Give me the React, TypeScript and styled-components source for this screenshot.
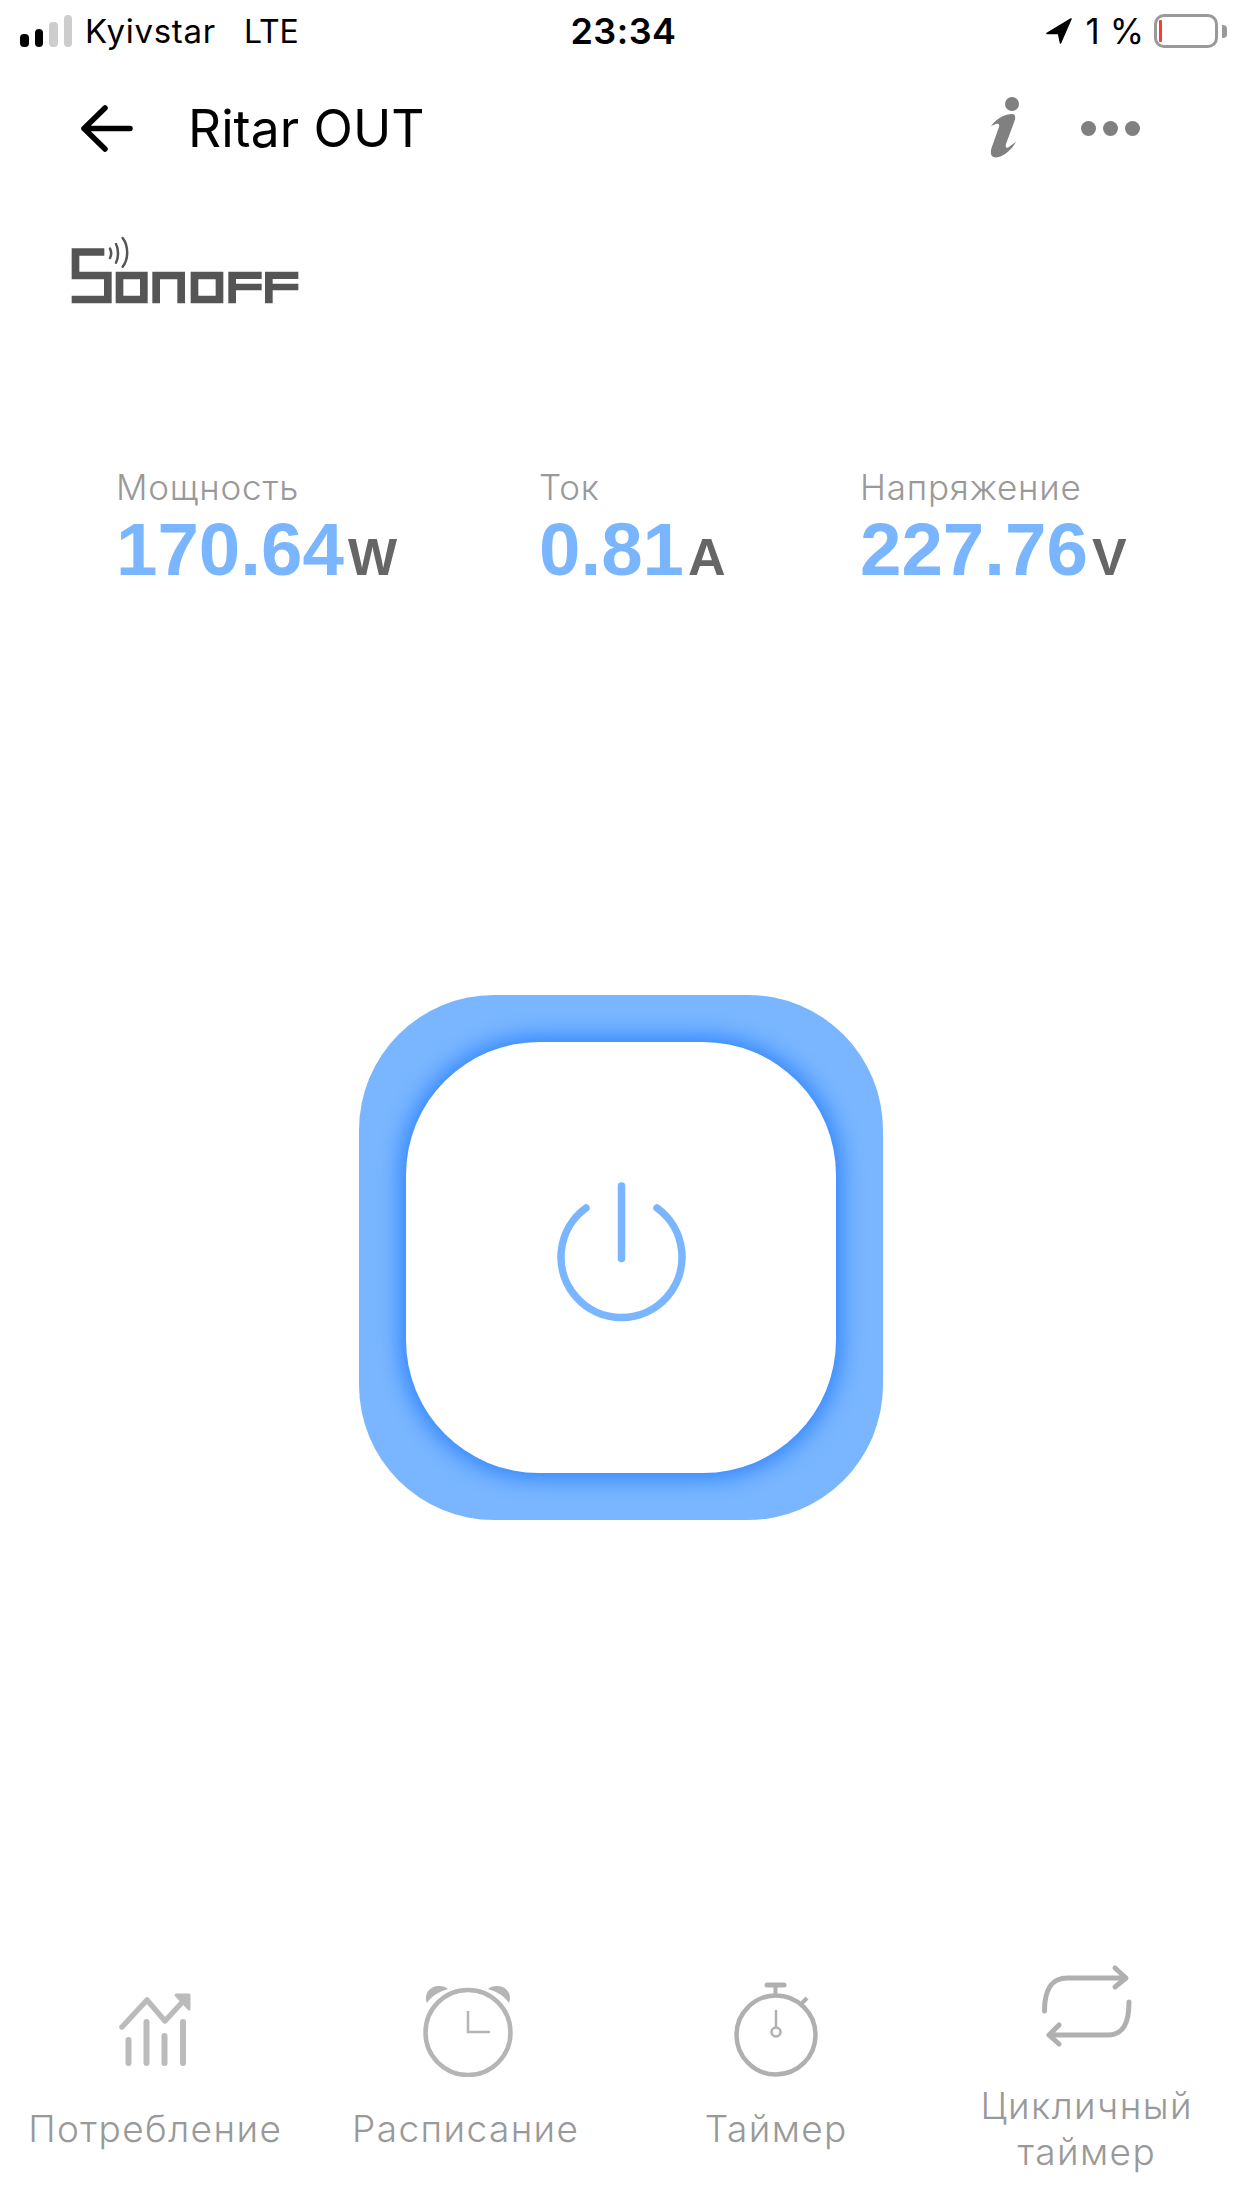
import styled, { createGlobalStyle } from 'styled-components';

const GlobalStyle = createGlobalStyle`
  html, body {
    margin: 0;
    padding: 0;
    background: #fff;
  }
`;

const Page = styled.div`
  width: 1242px;
  height: 2208px;
  overflow: hidden;
  display: flex;
  flex-direction: column;
  background: #fff;
  font-family: Inter, Roboto, 'Noto Sans', sans-serif;
`;

const StatusBar = styled.div`
  height: 62px;
  padding: 0 15px 0 20px;
  display: grid;
  grid-template-columns: 1fr auto 1fr;
  align-items: center;
  font-size: 33px;
  color: #000;
`;

const StatusLeft = styled.div`
  display: flex;
  align-items: center;
`;

const Signal = styled.div`
  display: flex;
  align-items: flex-end;
  gap: 6px;
  height: 32px;
  margin-right: 13px;
`;

const SignalBar = styled.span<{ $h: number; $on?: boolean }>`
  width: 8.5px;
  height: ${p => p.$h}px;
  border-radius: 4px;
  background: ${p => (p.$on ? '#000' : '#cdcdcd')};
`;

const Carrier = styled.span`
  margin-right: 28px;
  letter-spacing: 0.7px;
`;

const Network = styled.span`
  font-size: 32px;
`;

const Clock = styled.span`
  font-size: 36px;
  font-weight: 600;
  letter-spacing: 0.5px;
`;

const StatusRight = styled.div`
  display: flex;
  align-items: center;
  justify-content: flex-end;
`;

const Percent = styled.span`
  font-size: 35px;
  margin: 0 10px 0 14px;
`;

const Battery = styled.div`
  width: 64px;
  height: 34px;
  box-sizing: border-box;
  border: 3px solid #999;
  border-radius: 10px;
  padding: 3px 2px;
  display: flex;
`;

const BatteryLevel = styled.span`
  width: 3px;
  background: #ff3b30;
  border-radius: 1px;
`;

const BatteryNub = styled.span`
  width: 5px;
  height: 13px;
  margin-left: 4px;
  background: #999;
  border-radius: 0 4px 4px 0;
`;

const NavBar = styled.div`
  height: 132px;
  padding: 0 102px 0 81px;
  display: flex;
  align-items: center;
`;

const NavTitle = styled.h1`
  margin: 0 0 0 55px;
  font-size: 51.5px;
  font-weight: 400;
  color: #000;
`;

const NavActions = styled.div`
  margin-left: auto;
  display: flex;
  align-items: center;
  gap: 42px;
`;

const Dots = styled.div`
  display: flex;
  gap: 7px;
`;

const Dot = styled.span`
  width: 15px;
  height: 15px;
  border-radius: 50%;
  background: #808080;
`;

const LogoRow = styled.div`
  margin-top: 36px;
  padding-left: 60px;
  height: 80px;
`;

const Stats = styled.div`
  margin-top: 155px;
  padding-left: 116px;
  display: grid;
  grid-template-columns: 423px 321px 1fr;
`;

const StatLabel = styled.div`
  font-size: 35px;
  font-weight: 300;
  letter-spacing: 0.8px;
  line-height: 44px;
  color: #999;
`;

const StatValue = styled.div`
  margin-top: 1px;
  font-family: 'Liberation Sans', Arial, sans-serif;
  font-weight: 700;
  font-size: 74.5px;
  line-height: 80px;
  color: #7ab6ff;
  white-space: nowrap;
`;

const StatUnit = styled.span`
  font-size: 52px;
  color: #666;
  margin-left: 4px;
`;

const PowerButton = styled.div`
  margin: 398px auto 0;
  width: 524px;
  height: 525px;
  box-sizing: border-box;
  padding: 47px;
  border-radius: 135px;
  background: #7ab6ff;
  display: flex;
`;

const PowerFace = styled.div`
  flex: 1;
  border-radius: 133px;
  background: #fff;
  box-shadow: 0 0 22px 6px #3186ff;
  display: flex;
  align-items: center;
  justify-content: center;
`;

const TabBar = styled.div`
  margin-top: auto;
  margin-bottom: 23px;
  height: 238px;
  display: grid;
  grid-template-columns: repeat(4, 1fr);
  align-items: center;
`;

const Tab = styled.div`
  display: flex;
  flex-direction: column;
  align-items: center;
  gap: 29px;
`;

const TabIcon = styled.div`
  height: 96px;
  display: flex;
  align-items: center;
  justify-content: center;
`;

const TabLabel = styled.div<{ $narrow?: boolean }>`
  width: ${p => (p.$narrow ? '240px' : 'auto')};
  font-size: 37px;
  line-height: 46px;
  font-weight: 300;
  letter-spacing: 1.4px;
  color: #999;
  text-align: center;
`;

function SonoffLogo() {
  return (
    <svg width="250" height="80" viewBox="0 0 750 240" fill="#555">
      <path d="M35 55h98v22H58v48h97v95H35v-23h97v-49H35z" />
      <path fillRule="evenodd" d="M167 125h96v95h-96zM190 148v49h50v-49z" />
      <path d="M277 220v-95h98v95h-23v-72h-52v72z" />
      <path fillRule="evenodd" d="M392 125h98v95h-98zM415 148v49h52v-49z" />
      <path d="M505 125h100v22h-77v14h77v20h-77v39h-23z" />
      <path d="M615 125h100v22h-77v14h77v20h-77v39h-23z" />
      <g fill="none" stroke="#555" strokeWidth="7.500" strokeLinecap="round">
        <path d="M150 56c4 8 4 20 0 28" />
        <path d="M168 42c8 14 8 42 0 56" />
        <path d="M188 24c18 24 18 64 0 86" />
      </g>
    </svg>
  );
}

function BackArrow() {
  return (
    <svg width="52" height="47" viewBox="0 0 52 47" fill="none" stroke="#000" strokeWidth="5.500" strokeLinecap="round" strokeLinejoin="round">
      <path d="M3 23.500h46M24 3 3 23.500 24 44" />
    </svg>
  );
}

function InfoIcon() {
  return (
    <svg width="60" height="75" viewBox="0 0 60 75" fill="#808080">
      <circle cx="33" cy="13" r="7" />
      <path d="M12 35C18 27 26 23 33 23c4 0 3.500 4 2.500 7L27 53c-1 4 1 4.500 3 3 2.500-2 5-4 7-5-4 7-13 15.500-20 15.500-5 0-6-4-4.500-9.500L20 36c1-3-1-4-3-3z" />
    </svg>
  );
}

function PowerIcon() {
  return (
    <svg width="140" height="160" viewBox="0 0 140 160" fill="none" stroke="#7ab6ff" strokeWidth="7.500" strokeLinecap="round">
      <path d="M70.500 8v72.500" />
      <path d="M35 30a60.500 60.500 0 1 0 71 0" />
    </svg>
  );
}

function ChartIcon() {
  return (
    <svg width="74" height="76" viewBox="117 1992 74 76" fill="none" stroke="#bbb" strokeWidth="6" strokeLinecap="round" strokeLinejoin="round">
      <path d="M127.500 2041v23M145.500 2023v41M163.500 2037v27M182 2023v41" />
      <path d="M121 2028l25-27 18 21 22-24" strokeWidth="5.500" />
      <path d="M175 1996h13v14z" fill="#bbb" strokeWidth="3" />
    </svg>
  );
}

function AlarmIcon() {
  return (
    <svg width="96" height="96" viewBox="-2 -3 96 96" fill="none" stroke="#b5b5b5">
      <circle cx="48" cy="48.500" r="42.500" strokeWidth="4.500" />
      <path d="M48 27v21h22" strokeWidth="2.500" />
      <path d="M7 19C3 8 12 1 20 2c3 0 6 1 8 3C18 8 12 12 7 19z" fill="#b5b5b5" stroke="none" />
      <path d="M89 19c4-11-5-18-13-17-3 0-6 1-8 3 10 3 16 7 21 14z" fill="#b5b5b5" stroke="none" />
    </svg>
  );
}

function StopwatchIcon() {
  return (
    <svg width="96" height="96" viewBox="0 0 96 96" fill="none" stroke="#b0b0b0">
      <circle cx="48" cy="54" r="39.500" strokeWidth="4.500" />
      <path d="M39 4h17" strokeWidth="5" strokeLinecap="round" />
      <path d="M47.500 5v10" strokeWidth="4" />
      <path d="M74 22l5-5" strokeWidth="4" />
      <path d="M48 29v18" strokeWidth="2.500" />
      <circle cx="48" cy="51" r="4.500" strokeWidth="2.500" />
    </svg>
  );
}

function RepeatIcon() {
  return (
    <svg width="96" height="84" viewBox="1040 1965 96 84" fill="none" stroke="#b0b0b0" strokeWidth="5" strokeLinecap="round" strokeLinejoin="round">
      <path d="M1045.500 2012c0-22 7-33 23-33h58M1116 1969l11 10-11 9" />
      <path d="M1130 2003c0 22-6 33-22 33h-58M1060 2026l-10 10 10 9" />
    </svg>
  );
}

const stats = [
  { label: 'Мощность', value: '170.64', unit: 'W' },
  { label: 'Ток', value: '0.81', unit: 'A' },
  { label: 'Напряжение', value: '227.76', unit: 'V' },
];

const tabs = [
  { label: 'Потребление', icon: <ChartIcon /> },
  { label: 'Расписание', icon: <AlarmIcon /> },
  { label: 'Таймер', icon: <StopwatchIcon /> },
  { label: 'Цикличный таймер', icon: <RepeatIcon />, narrow: true },
];

export default function App() {
  return (
    <Page>
      <GlobalStyle />
      <StatusBar>
        <StatusLeft>
          <Signal>
            <SignalBar $h={13} $on />
            <SignalBar $h={18} $on />
            <SignalBar $h={25} />
            <SignalBar $h={32} />
          </Signal>
          <Carrier>Kyivstar</Carrier>
          <Network>LTE</Network>
        </StatusLeft>
        <Clock>23:34</Clock>
        <StatusRight>
          <svg width="26" height="26" viewBox="0 0 26 26" fill="#000" stroke="#000" strokeWidth="1.500" strokeLinejoin="round">
            <path d="M25 1 1 15.500h11.500L14.500 25z" />
          </svg>
          <Percent>1 %</Percent>
          <Battery>
            <BatteryLevel />
          </Battery>
          <BatteryNub />
        </StatusRight>
      </StatusBar>

      <NavBar>
        <BackArrow />
        <NavTitle>Ritar OUT</NavTitle>
        <NavActions>
          <InfoIcon />
          <Dots>
            <Dot />
            <Dot />
            <Dot />
          </Dots>
        </NavActions>
      </NavBar>

      <LogoRow>
        <SonoffLogo />
      </LogoRow>

      <Stats>
        {stats.map(s => (
          <div key={s.label}>
            <StatLabel>{s.label}</StatLabel>
            <StatValue>
              {s.value}
              <StatUnit>{s.unit}</StatUnit>
            </StatValue>
          </div>
        ))}
      </Stats>

      <PowerButton>
        <PowerFace>
          <PowerIcon />
        </PowerFace>
      </PowerButton>

      <TabBar>
        {tabs.map(t => (
          <Tab key={t.label}>
            <TabIcon>{t.icon}</TabIcon>
            <TabLabel $narrow={t.narrow}>{t.label}</TabLabel>
          </Tab>
        ))}
      </TabBar>
    </Page>
  );
}
